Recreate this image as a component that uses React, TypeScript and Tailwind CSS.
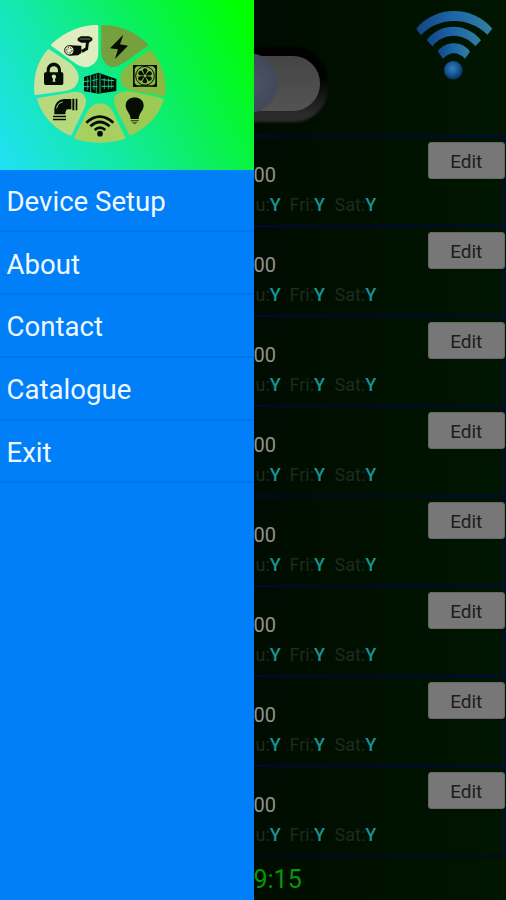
const menu = ["Device Setup", "About", "Contact", "Catalogue", "Exit"];
const timers = [0, 1, 2, 3, 4, 5, 6, 7];

function Wheel() {
  return (
    <svg viewBox="0 0 480 450" className="h-[150px] w-[160px]" aria-label="Home services">
      <g strokeWidth="8" strokeLinejoin="round">
        <path fill="#e0edc0" stroke="#e0edc0" d="M231 49Q158 50 97 105L160 151Q187 173 207 166Q231 155 231 130Z" />
        <path fill="#76a03e" stroke="#76a03e" d="M248 49Q323 50 381 105L310 155Q280 174 265 163Q248 148 248 130Z" />
        <path fill="#8bb843" stroke="#8bb843" d="M390 124Q439 180 432 254L345 240Q309 233 305 207Q306 183 332 165Z" />
        <path fill="#9dca54" stroke="#9dca54" d="M427 269Q407 335 332 373L292 295Q276 259 302 251Q320 244 345 251Z" />
        <path fill="#a8d061" stroke="#a8d061" d="M312 383Q240 405 166 383L205 307Q220 284 240 284Q263 284 275 307Z" />
        <path fill="#b7d97e" stroke="#b7d97e" d="M55 268L148 252Q176 245 187 256Q200 271 189 294L151 373Q78 340 55 268Z" />
        <path fill="#cbe29d" stroke="#cbe29d" d="M86 122L150 164Q173 184 172 206Q168 234 140 238L47 251Q41 172 86 122Z" />
      </g>
      <g fill="#050d05">
        {/* camera */}
        <path d="M173 85L183 79H207L217 84V91L207 98H184L173 92Z" />
        <path d="M198 96H207L204 119L188 128L182 121L196 113Z" />
        <path d="M148 106L184 107V129L174 136L148 137Z" />
        <circle cx="148" cy="121" r="14" fill="#e0edc0" stroke="#050d05" strokeWidth="3" />
        <circle cx="148" cy="121" r="8" fill="none" stroke="#050d05" strokeWidth="3" strokeDasharray="4 4" />
        <path d="M179 87H212" stroke="#e0edc0" strokeWidth="1.5" />
        {/* bolt */}
        <path d="M310 74L270 115L294 118L285 147L324 107L300 103Z" />
        {/* padlock */}
        <path fillRule="evenodd" d="M76 187H80V181C80 151 123 151 123 181V187H126Q130 187 130 192V220Q130 225 125 225H78Q72 225 72 219V193Q72 187 76 187ZM89 187H114V181C114 165 89 165 89 181ZM98 215H106L105 207Q111 202 107 196Q102 191 96 196Q93 203 99 207Z" />
        {/* pipe */}
        <path d="M99 317H138V322H99ZM99 326H138V331H99ZM103 313V297Q106 270 131 267H154V298H143Q136 299 136 313ZM157 266H163V301H157ZM167 266H172V301H167Z" />
        <path d="M110 295Q112 280 127 276" fill="none" stroke="#b7d97e" strokeWidth="3" />
        {/* bulb */}
        <path d="M317 286C318 255 370 255 371 286C371 303 357 308 356 327H332C331 308 317 304 317 286Z" />
        <path d="M332 330H356V334H332ZM335 337H353L344 343Z" opacity=".65" />
        {/* wireless */}
        <circle cx="240" cy="371" r="8.5" />
        <g fill="none" stroke="#050d05" strokeWidth="8">
          <path d="M199 338Q239 302 280 338" />
          <path d="M211 349Q239 323 269 349" />
          <path d="M224 360Q240 346 256 360" />
        </g>
        {/* fan */}
        <path fillRule="evenodd" d="M339 165H411V230H339ZM344 169V226H406V169Z" />
        <circle cx="375" cy="197.5" r="28" fill="none" stroke="#050d05" strokeWidth="3" />
        {[0, 60, 120, 180, 240, 300].map((angle) => (
          <path key={angle} transform={`rotate(${angle} 375 197.5)`} d="M375 197L368 180Q375 170 383 180Z" />
        ))}
        <circle cx="375" cy="197.5" r="4" fill="#8bb843" />
        <path d="M339 165H355L339 180ZM395 165H411V180ZM339 215L355 230H339ZM411 215V230H395Z" />
        {/* building */}
        <path d="M192 201L210 196L235 188L289 207V243L235 251L210 247L192 244Z" />
      </g>
      <g stroke="#10df91" strokeWidth="2" fill="none">
        <path d="M203 201V240M222 196V240M229 192V250M253 204V238M266 205V238M275 206V236" />
        <path d="M192 215L208 213M217 212L233 208M244 209L282 212M192 230H208M217 230H233M244 229H282" strokeWidth="3" />
        <path d="M212 194V249M240 192V250" strokeWidth="2.5" />
      </g>
    </svg>
  );
}

function WifiMark() {
  return (
    <svg viewBox="0 0 318 270" className="absolute top-0 left-[146.5px] h-[90px] w-[106px]">
      <defs>
        <linearGradient id="signal" x1="0" x2="1">
          <stop stopColor="#114585" />
          <stop offset=".5" stopColor="#1e66a8" />
          <stop offset="1" stopColor="#317f9c" />
        </linearGradient>
        <radialGradient id="dot" cx=".45" cy=".4" r=".6">
          <stop stopColor="#327fb5" />
          <stop offset=".6" stopColor="#165393" />
          <stop offset="1" stopColor="#062d5b" />
        </radialGradient>
      </defs>
      <g fill="url(#signal)">
        <path d="M49 86C105 15 220 15 277 86L262 104C207 49 117 49 64 104L61 104Z" />
        <path d="M80 120C122 67 200 67 243 121L226 139C190 97 131 97 97 139Z" />
        <path d="M113 154C138 122 187 122 210 155L195 176C175 154 148 154 129 176Z" />
      </g>
      <circle cx="160" cy="211" r="28" fill="url(#dot)" />
    </svg>
  );
}

function Day({ name }: { name: string }) {
  return (
    <span className="text-[#1c2b21]">
      {name}:<b className="font-medium text-[#169493]">Y</b>
    </span>
  );
}

function TimerRow() {
  return (
    <div className="relative mr-[1px] h-[90px] border-t-2 border-r-2 border-[#000836]">
      <div className="flex h-full flex-col pt-[26px]">
        <span className="h-[27px] text-[20px] leading-[24px] text-[#92928c]">00</span>
        <div className="flex pt-[3px] pl-[2px] text-[18px] leading-[24px]">
          <div className="w-[34px]"><Day name="u" /></div>
          <div className="w-[45px]"><Day name="Fri" /></div>
          <Day name="Sat" />
        </div>
      </div>
      <button className="absolute top-[5px] -right-[1.5px] h-[36.5px] w-[76.5px] rounded-[3px] border border-[#666] bg-[#777] pt-[3px] text-[19px] leading-[30px] text-[#1c1c1c]">
        Edit
      </button>
    </div>
  );
}

export default function App() {
  return (
    <div className="flex h-[900px] w-[506px] overflow-hidden bg-[#010a01] font-['Roboto',sans-serif]">
      <aside className="w-[253.5px] shrink-0 bg-[#007ff9]">
        <header className="h-[169.5px] bg-[linear-gradient(60deg,#20e0f6_0%,#15e8ad_32%,#0af05c_62%,#00ff00_95%)] pt-[10px] pl-[20px]">
          <Wheel />
        </header>
        <nav>
          {menu.map((item) => (
            <a key={item} className="flex h-[62.8px] items-center border-b-2 border-[#0075ea] pt-[3px] pl-[6.5px] text-[27.6px] text-[#eff8ff]">
              {item}
            </a>
          ))}
        </nav>
      </aside>
      <main className="min-w-0 flex-1 bg-[linear-gradient(90deg,#000c00,#001600)]">
        <div className="relative h-[135px] overflow-hidden">
          <div className="absolute top-[47px] -left-[60px] h-[75px] w-[134px] rounded-[34px] bg-[linear-gradient(#000300_40%,#2b2b2b_90%)] blur-[1px]" />
          <div className="absolute top-[56px] -left-[60px] h-[55px] w-[126px] rounded-[27px] bg-[linear-gradient(#454545,#535353)]" />
          <div className="absolute top-[53px] -left-[36px] size-[60px] rounded-full bg-[radial-gradient(circle_at_55%_50%,#505464_0%,#41495a_60%,#303b4d_100%)]" />
          <WifiMark />
        </div>
        {timers.map((timer) => (
          <TimerRow key={timer} />
        ))}
        <footer className="h-[45px] border-t-2 border-[#000826] pt-[7px] text-[25px] leading-[32px] text-[#069706]">9:15</footer>
      </main>
    </div>
  );
}
